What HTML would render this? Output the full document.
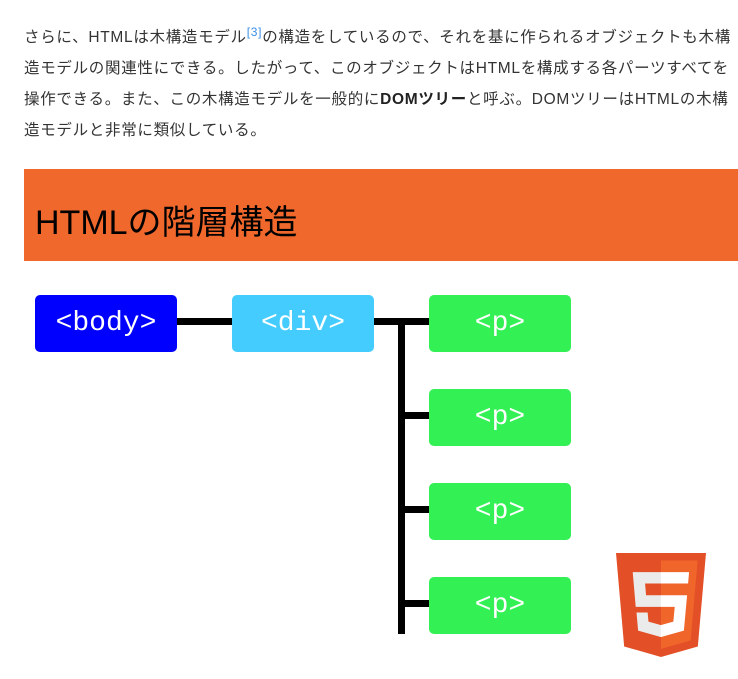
<!DOCTYPE html><html><head><meta charset="utf-8"><style>
body{margin:0;width:738px;height:679px;background:#fff;position:relative;overflow:hidden;font-family:"Liberation Sans","Noto Sans CJK JP",sans-serif}
.t{position:absolute;left:24px;top:22px;width:720px;font-size:15.5px;line-height:31px;color:#333;white-space:nowrap;letter-spacing:0.7px}
.t sup{color:#3a8ee6;font-size:12px;line-height:0}
.h{position:absolute;left:24px;top:169px;width:714px;height:92px;background:#f0682c}
.h span{position:absolute;left:11px;top:26px;font-size:34px;color:#000}
.b{position:absolute;width:142px;height:57px;border-radius:5px;color:#fff;font-family:"Liberation Mono",monospace;font-size:28px;text-align:center;line-height:57px}
.l{position:absolute;background:#000}
</style></head><body>
<div class="t">さらに、HTMLは木構造モデル<sup>[3]</sup>の構造をしているので、それを基に作られるオブジェクトも木構<br>造モデルの関連性にできる。したがって、このオブジェクトはHTMLを構成する各パーツすべてを<br>操作できる。また、この木構造モデルを一般的に<b style="color:#222">DOMツリー</b>と呼ぶ。DOMツリーはHTMLの木構<br>造モデルと非常に類似している。</div>
<div class="h"><span>HTMLの階層構造</span></div>
<div class="l" style="left:177px;top:318px;width:55px;height:7px"></div>
<div class="l" style="left:373px;top:318px;width:56px;height:7px"></div>
<div class="l" style="left:398px;top:318px;width:7px;height:316px"></div>
<div class="l" style="left:398px;top:412px;width:31px;height:7px"></div>
<div class="l" style="left:398px;top:506px;width:31px;height:7px"></div>
<div class="l" style="left:398px;top:600px;width:31px;height:7px"></div>
<div class="b" style="left:35px;top:295px;background:#0000ff">&lt;body&gt;</div>
<div class="b" style="left:232px;top:295px;background:#44ccff">&lt;div&gt;</div>
<div class="b" style="left:429px;top:295px;background:#33f054">&lt;p&gt;</div>
<div class="b" style="left:429px;top:389px;background:#33f054">&lt;p&gt;</div>
<div class="b" style="left:429px;top:483px;background:#33f054">&lt;p&gt;</div>
<div class="b" style="left:429px;top:577px;background:#33f054">&lt;p&gt;</div>
<svg style="position:absolute;left:616px;top:553px" width="90" height="104" viewBox="30 0 452 512" preserveAspectRatio="none">
<path d="M71 460L30 0h452l-41 460-185 52z" fill="#e34f26"/>
<path d="M256 472l149-41 35-394H256z" fill="#ef652a"/>
<path d="M256 208h-75l-5-58h80V94H114l15 171h127zm0 147l-63-17-4-45h-56l8 89 115 32z" fill="#ebebeb"/>
<path d="M255 208v57h70l-7 73-63 17v59l116-32 16-174zm0-114v56h137l5-56z" fill="#fff"/>
</svg>
</body></html>
